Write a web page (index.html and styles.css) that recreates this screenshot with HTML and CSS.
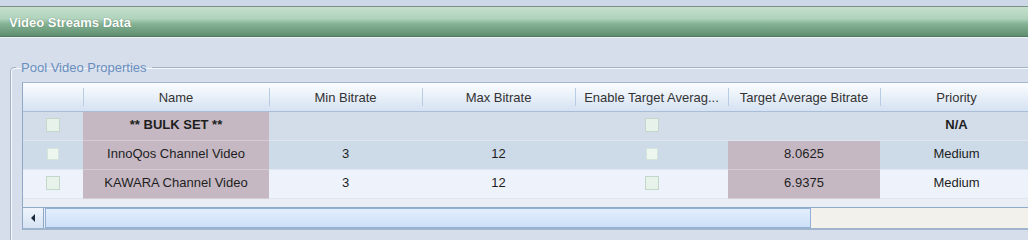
FILE: index.html
```html
<!DOCTYPE html>
<html lang="en">
<head>
    <meta charset="UTF-8">
    <meta name="viewport" content="width=device-width, initial-scale=1.0">
    <title>Video Streams Data</title>
    <link rel="stylesheet" href="styles.css">
</head>
<body>

    <div class="top-gap"></div>
    <div class="panel-title">Video Streams Data</div>

    <div class="panel-body">
        <fieldset class="group">
            <legend>Pool Video Properties</legend>

            <div class="grid">
                <div class="row head">
                    <div class="cell"></div>
                    <div class="cell sep">Name</div>
                    <div class="cell sep">Min Bitrate</div>
                    <div class="cell sep">Max Bitrate</div>
                    <div class="cell sep">Enable Target Averag...</div>
                    <div class="cell sep">Target Average Bitrate</div>
                    <div class="cell sep">Priority</div>
                </div>

                <div class="row bulk">
                    <div class="cell"><span class="check"></span></div>
                    <div class="cell pink bold">** BULK SET **</div>
                    <div class="cell"></div>
                    <div class="cell"></div>
                    <div class="cell"><span class="check"></span></div>
                    <div class="cell"></div>
                    <div class="cell bold">N/A</div>
                </div>

                <div class="row selected">
                    <div class="cell"><span class="check small"></span></div>
                    <div class="cell pink">InnoQos Channel Video</div>
                    <div class="cell">3</div>
                    <div class="cell">12</div>
                    <div class="cell"><span class="check small"></span></div>
                    <div class="cell pink">8.0625</div>
                    <div class="cell">Medium</div>
                </div>

                <div class="row plain">
                    <div class="cell"><span class="check"></span></div>
                    <div class="cell pink">KAWARA Channel Video</div>
                    <div class="cell">3</div>
                    <div class="cell">12</div>
                    <div class="cell"><span class="check"></span></div>
                    <div class="cell pink">6.9375</div>
                    <div class="cell">Medium</div>
                </div>

                <div class="grid-empty"></div>

                <div class="hscroll">
                    <div class="hs-btn">
                        <svg width="6" height="8" viewBox="0 0 6 8"><path d="M5 0 L1 4 L5 8 Z" fill="#1a2a3c"/></svg>
                    </div>
                    <div class="hs-thumb"></div>
                    <div class="hs-track"></div>
                </div>
            </div>
        </fieldset>
    </div>

</body>
</html>
```

FILE: styles.css
```css
body {
    font-family: "Liberation Sans", Arial, sans-serif;
    font-size: 13px;
    margin: 0;
    padding: 0;
    background-color: #d5deea;
    overflow: hidden;
    color: #1e1e1e;
}
.top-gap {
    height: 6px;
    background: #ccd8e8;
}
.panel-title {
    height: 29px;
    border-top: 1px solid #7d8f86;
    border-bottom: 1px solid #4f7a60;
    background: linear-gradient(#c4e0cc 0%, #b0d3bc 40%, #85b394 58%, #5f8e70 100%);
    color: #fff;
    font-weight: bold;
    line-height: 31px;
    padding-left: 9px;
    text-shadow: 0 0 1px rgba(40, 70, 50, 0.6);
}
.panel-body {
    border-top: 1px solid #eef2f7;
    width: 1100px;
}
.group {
    margin: 22px 0 0 10px;
    padding: 7px 0 30px 11px;
    border: 1px solid #a4b4c8;
    border-radius: 4px;
    box-shadow: inset 1px 1px 0 #f4f7fb;
    min-width: 0;
}
.group legend {
    color: #6a8ec0;
    line-height: 15px;
    padding: 0 5px;
    margin-left: -6px;
}
.grid {
    width: 1011px;
    border-left: 1px solid #8fa8c8;
    border-top: 1px solid #a3b5d0;
    background: #e9eef5;
}
.row {
    display: grid;
    grid-template-columns: 60px 186px 153px 153px 153px 152px 153px;
}
.cell {
    text-align: center;
    height: 29px;
    line-height: 16px;
    padding-top: 5px;
    box-sizing: border-box;
    border-bottom: 1px solid #dfe6ef;
}
.head .cell {
    height: 29px;
    line-height: 29px;
    padding-top: 0;
    color: #333;
    border-bottom: 1px solid #a9bdd6;
    background: linear-gradient(#fbfdff, #d5e2f2);
    position: relative;
}
.head .sep::before {
    content: "";
    position: absolute;
    left: 0;
    top: 5px;
    bottom: 5px;
    width: 1px;
    background: #b9cce4;
}
.bulk .cell {
    background: #d3dde9;
}
.selected .cell {
    background: #cddae8;
}
.plain .cell {
    background: #eef3fb;
}
.row .pink {
    background: #c5b8c3;
    border-bottom-color: #d6cbd4;
}
.bold {
    font-weight: bold;
}
.check {
    display: inline-block;
    width: 12px;
    height: 12px;
    margin-top: 1px;
    border: 1px solid #c3d6ca;
    background: #e6f2ea;
    vertical-align: top;
}
.check.small {
    width: 10px;
    height: 10px;
    margin-top: 2px;
    border-color: #d4e4da;
    background: #edf6ef;
}
.grid-empty {
    height: 8px;
}
.hscroll {
    display: flex;
    height: 20px;
    border-top: 1px solid #8faacb;
    border-bottom: 2px solid #a0b4cc;
}
.hs-btn {
    width: 20px;
    border-right: 1px solid #8fa6c4;
    background: linear-gradient(#eef4fc, #d6e3f3);
    display: flex;
    align-items: center;
    justify-content: center;
}
.hs-thumb {
    width: 764px;
    margin-left: 1px;
    border: 1px solid #92b0d8;
    background: linear-gradient(#e3eefc, #cde0f7);
}
.hs-track {
    flex: 1;
    background: #f2f1ec;
}
```
